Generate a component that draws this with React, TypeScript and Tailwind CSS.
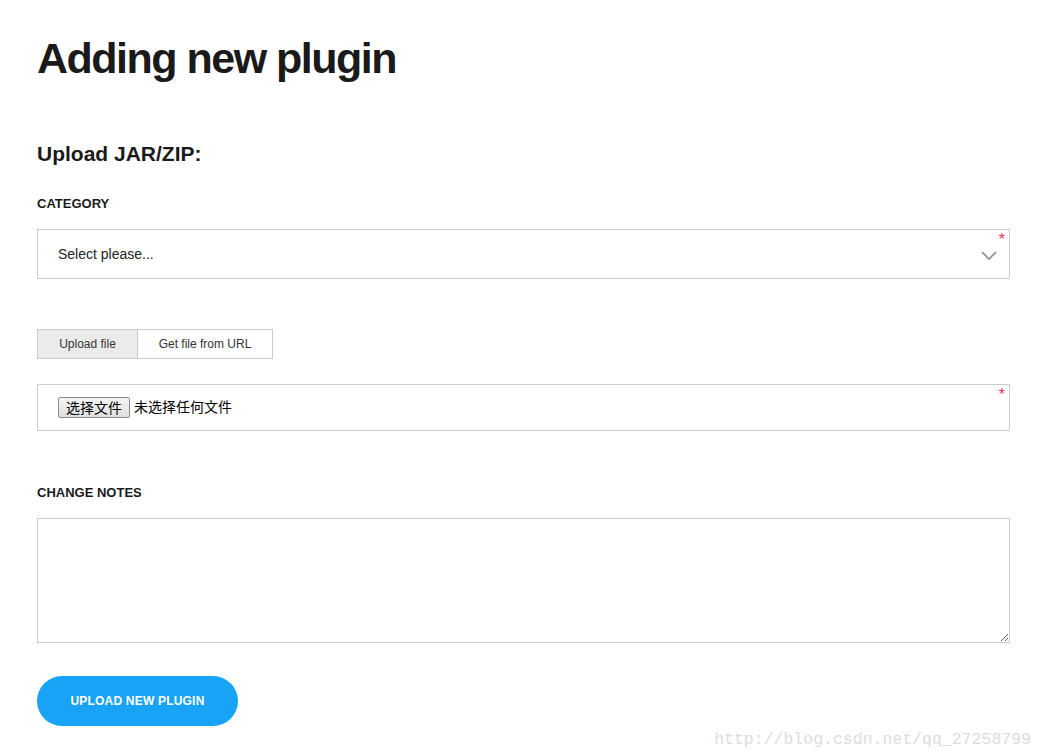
import { useState } from 'react'

const Asterisk = () => (
  <span className="absolute right-[4px] top-[2px] text-[16px] leading-none text-[#f0345a]">*</span>
)

export default function App() {
  const [tab, setTab] = useState<'file' | 'url'>('file')

  return (
    <div className="relative h-[754px] overflow-hidden bg-white font-['Liberation_Sans','Noto_Sans_CJK_SC',sans-serif] text-[#1a1a1a]">
      <div className="flex flex-col pl-[37px] pr-[33px] pt-[37px]">
        <h1 className="text-[43px] font-bold leading-none tracking-[-1.5px]">Adding new plugin</h1>

        <h2 className="mt-[63px] text-[21px] font-bold leading-none">Upload JAR/ZIP:</h2>

        <label className="mt-[33px] text-[13px] font-bold leading-none">CATEGORY</label>
        <div className="relative mt-[19px] flex h-[50px] items-center border border-[#cccccc] pl-[20px] pr-[12px]">
          <span className="flex-1 text-[14px] text-[#222]">Select please...</span>
          <svg width="16" height="10" viewBox="0 0 16 10" className="mt-[4px]">
            <polyline points="1,1 8,8 15,1" fill="none" stroke="#888" strokeWidth="1.6" />
          </svg>
          <Asterisk />
        </div>

        <div className="mt-[50px] flex text-[12px] leading-none text-[#333]">
          <button
            onClick={() => setTab('file')}
            className={`flex h-[30px] w-[101px] items-center justify-center border border-[#cccccc] ${tab === 'file' ? 'bg-[#ebebeb]' : 'bg-white'}`}
          >
            Upload file
          </button>
          <button
            onClick={() => setTab('url')}
            className={`-ml-px flex h-[30px] w-[136px] items-center justify-center border border-[#cccccc] ${tab === 'url' ? 'bg-[#ebebeb]' : 'bg-white'}`}
          >
            Get file from URL
          </button>
        </div>

        <div className="relative mt-[25px] flex h-[47px] items-center border border-[#cccccc] pl-[20px]">
          <span className="flex h-[21px] items-center rounded-[2px] border border-[#8a8a8a] bg-gradient-to-b from-[#f6f6f6] to-[#dedede] px-[7px] text-[14px] leading-none text-black">
            选择文件
          </span>
          <span className="ml-[4px] text-[14px] text-black">未选择任何文件</span>
          <Asterisk />
        </div>

        <label className="mt-[55px] text-[13px] font-bold leading-none">CHANGE NOTES</label>
        <textarea className="mt-[19px] h-[125px] border border-[#cccccc] p-2 text-[14px] outline-none" />

        <div className="mt-[33px]">
          <button className="h-[50px] w-[201px] rounded-full bg-[#18a3f7] text-[12px] font-bold tracking-[0.2px] text-white">
            UPLOAD NEW PLUGIN
          </button>
        </div>
      </div>

      <div className="absolute bottom-[6px] right-[12px] font-['Liberation_Mono',monospace] text-[16.5px] leading-none text-[#dcdcdc]">
        http://blog.csdn.net/qq_27258799
      </div>
    </div>
  )
}
